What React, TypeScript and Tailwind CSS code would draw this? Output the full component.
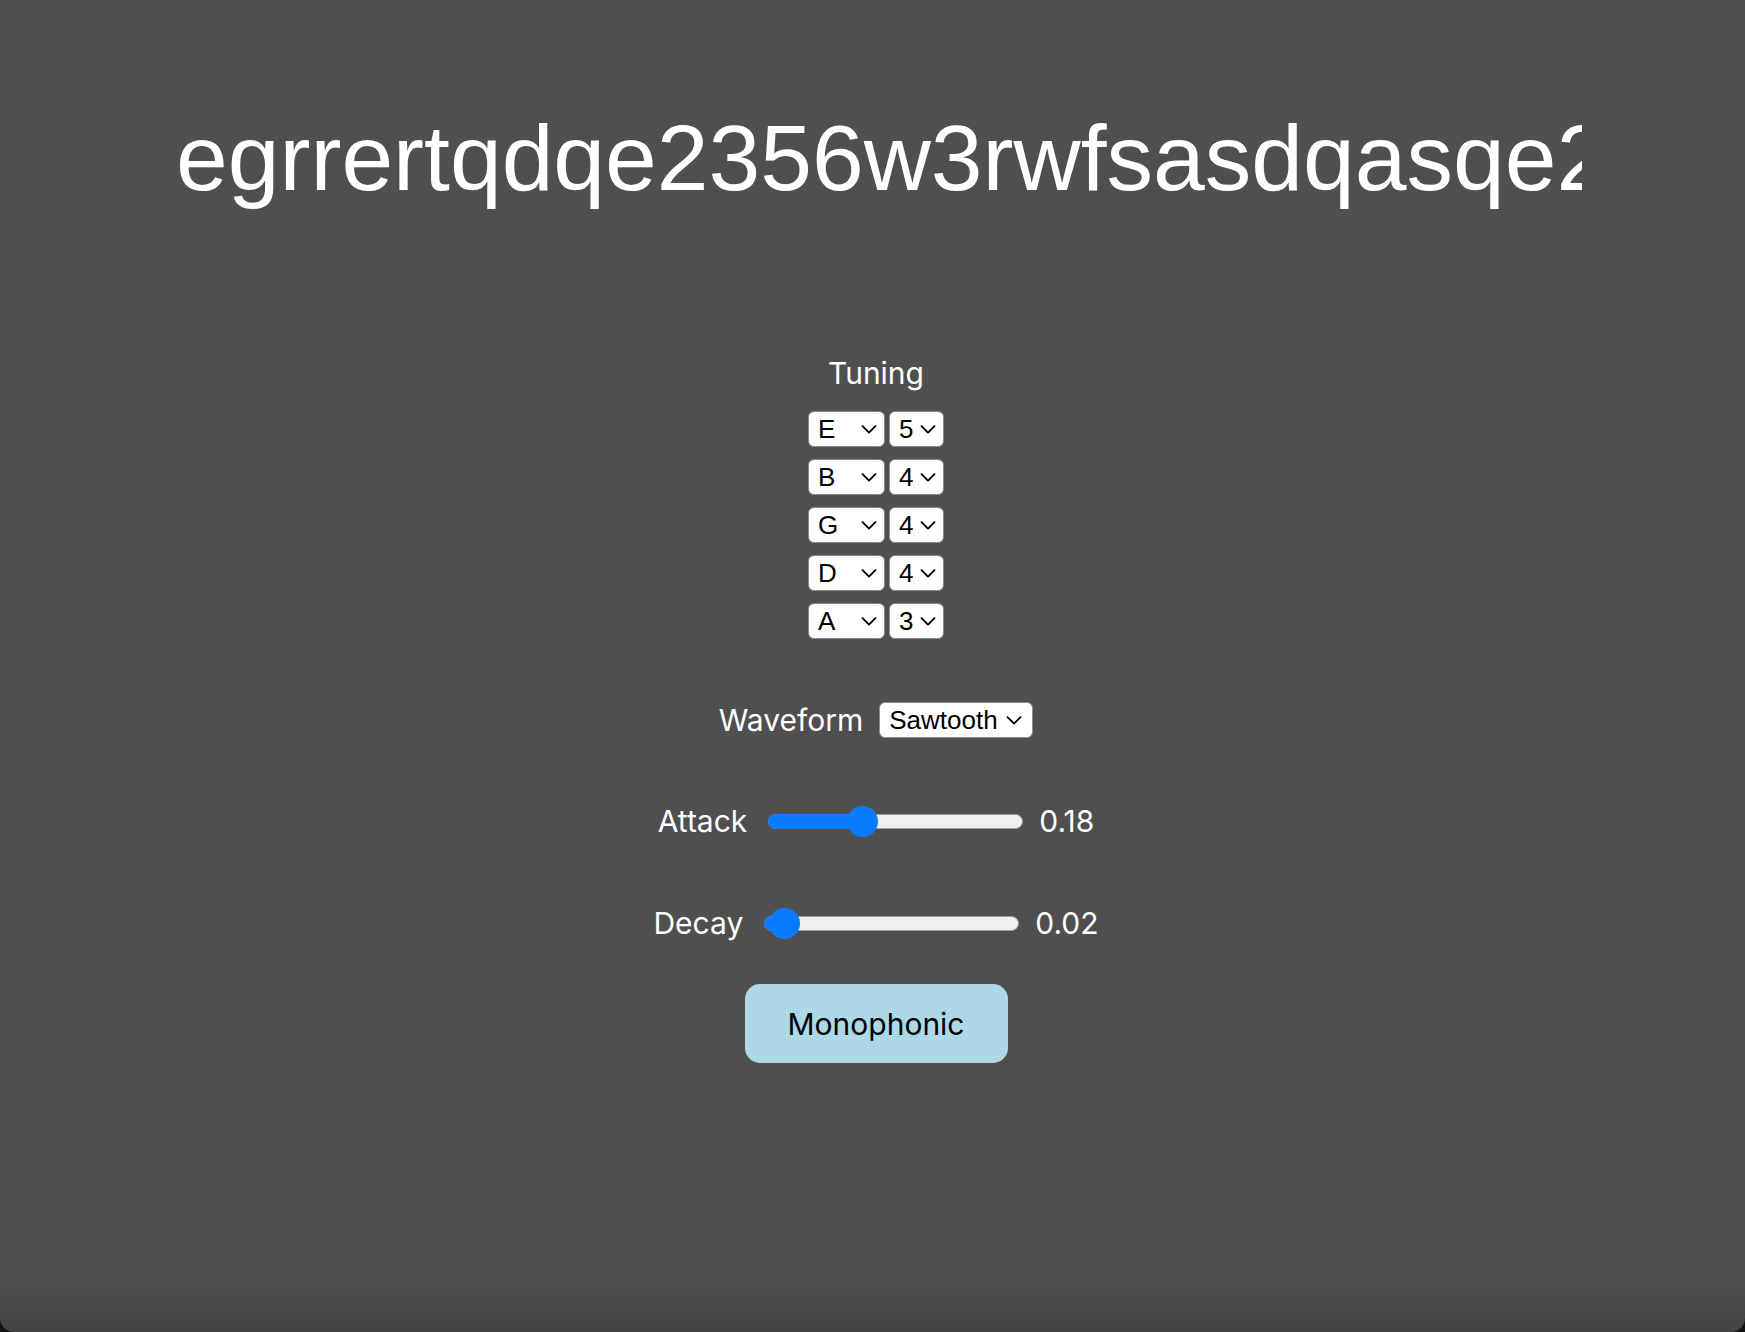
import React from 'react'

const tuning = [
  { note: 'E', octave: '5' },
  { note: 'B', octave: '4' },
  { note: 'G', octave: '4' },
  { note: 'D', octave: '4' },
  { note: 'A', octave: '3' },
]

function Chevron({ className }: { className?: string }) {
  return (
    <svg viewBox="0 0 16 9" className={className} fill="none" stroke="#000" strokeWidth="1.8" strokeLinecap="round" strokeLinejoin="round">
      <path d="M1.5 1.2 L8 7.6 L14.5 1.2" />
    </svg>
  )
}

function FakeSelect({ value, width, chevronRight = 'right-[7px]' }: { value: string; width: string; chevronRight?: string }) {
  return (
    <div
      className={`relative flex h-[36px] items-center rounded-[6px] border-[1.5px] border-[#8a8a8a] bg-white pl-[9px] text-[26px] leading-none text-black ${width}`}
      style={{ fontFamily: '"Liberation Sans", Arial, sans-serif' }}
    >
      {value}
      <Chevron className={`absolute top-[13px] h-[9px] w-[16px] ${chevronRight}`} />
    </div>
  )
}

function Slider({ label, value, frac }: { label: string; value: string; frac: number }) {
  // thumb is 31px on a 255px track
  const center = 15.5 + (255 - 31) * frac
  return (
    <div className="flex h-[32px] items-center text-[30px] leading-none text-white">
      <span>{label}</span>
      <div className="relative ml-[21px] h-[15px] w-[255px] rounded-full border border-[#9b9b9b] bg-[#efefef]">
        <div className="absolute -left-px -top-px h-[15px] rounded-l-full bg-[#0a7aff]" style={{ width: center }} />
        <div
          className="absolute top-[-9px] h-[31px] w-[31px] rounded-full bg-[#0a7aff]"
          style={{ left: center - 16.5 }}
        />
      </div>
      <span className="ml-[16px]">{value}</span>
    </div>
  )
}

export default function App() {
  return (
    <div className="min-h-screen bg-[#141414]">
      <div
        className="h-[1332px] overflow-hidden rounded-b-[14px] bg-linear-to-b from-[#4f4f4f] from-[96%] to-[#434343]"
        style={{ fontFamily: 'Inter, "Noto Sans", sans-serif' }}
      >
        <h1
          className="ml-[176px] mt-[112px] h-[120px] w-[1406px] overflow-hidden whitespace-nowrap text-[93px] font-normal leading-none text-white"
          style={{ fontFamily: '"Liberation Sans", Arial, sans-serif' }}
        >
          egrrertqdqe2356w3rwfsasdqasqe2356w3rwfsasdqasqe
        </h1>

        <div className="flex flex-col items-center pl-[7px]">
          <div className="mt-[126px] text-[30px] leading-none text-white">Tuning</div>

          <div className="mt-[23px] flex flex-col gap-[12px]">
            {tuning.map((s, i) => (
              <div key={i} className="flex gap-[4px]">
                <FakeSelect value={s.note} width="w-[77px]" />
                <FakeSelect value={s.octave} width="w-[55px]" />
              </div>
            ))}
          </div>

          <div className="mt-[63px] flex h-[36px] items-center gap-[16px]">
            <span className="text-[30px] leading-none text-white">Waveform</span>
            <FakeSelect value="Sawtooth" width="w-[154px]" chevronRight="right-[10px]" />
          </div>

          <div className="mt-[67px]">
            <Slider label="Attack" value="0.18" frac={0.35} />
          </div>

          <div className="mt-[70px]">
            <Slider label="Decay" value="0.02" frac={0.02} />
          </div>

          <button className="mt-[45px] h-[79px] w-[263px] rounded-[15px] bg-[#add8e6] text-[30px] leading-none text-black">
            Monophonic
          </button>
        </div>
      </div>
    </div>
  )
}
